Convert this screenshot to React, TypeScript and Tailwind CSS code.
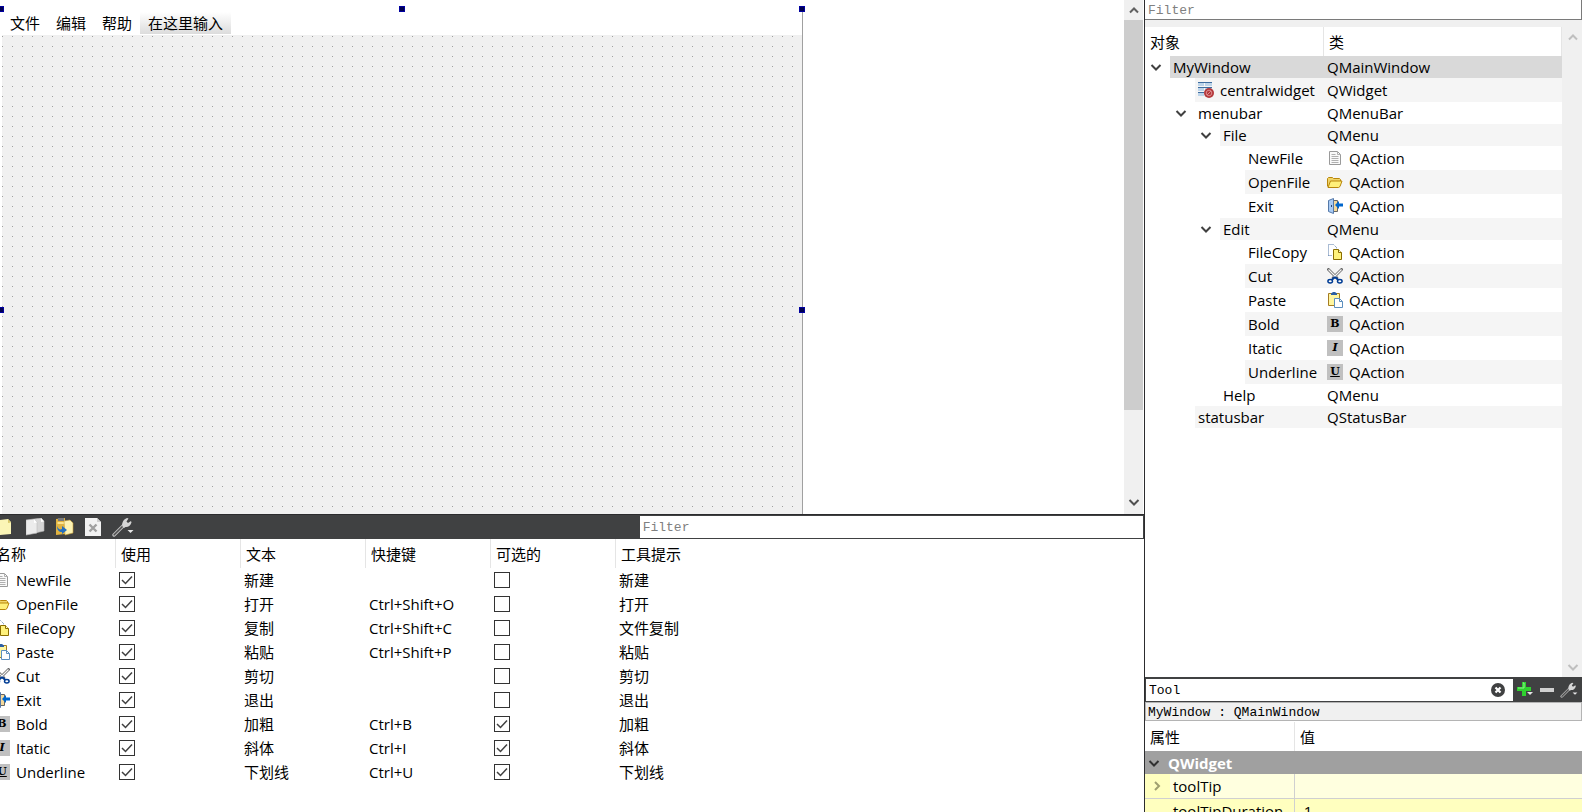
import { useState, type ReactNode } from "react";

const SANS = "font-['Open_Sans','Noto_Sans_CJK_SC',sans-serif]";
const MONO = "font-['Liberation_Mono','Noto_Sans_CJK_SC',monospace]";

type IconName = "new" | "open" | "exit" | "copy" | "cut" | "paste" | "bold" | "italic" | "underline" | "widget";

function Letter({ children, className }: { children: string; className: string }) {
  return (
    <span className={`flex size-4 shrink-0 items-center justify-center bg-[#c0c0c0] font-['DejaVu_Serif',serif] text-[11px] leading-4 font-bold text-black ${className}`}>
      {children}
    </span>
  );
}

function Icon({ name }: { name: IconName }) {
  if (name === "bold") return <Letter className="">B</Letter>;
  if (name === "italic") return <Letter className="italic">I</Letter>;
  if (name === "underline") return <Letter className="underline underline-offset-1">U</Letter>;
  return (
    <svg viewBox="0 0 16 16" className="size-4 shrink-0" fill="none" aria-hidden="true">
      {name === "new" && (
        <>
          <path d="M2.500 1.500h8l3 3v10h-11z" fill="#fafafa" stroke="#9a9a9a" />
          <path d="M10.500 1.500v3h3M4.500 4.500h4M4.500 6.500h7M4.500 8.500h7M4.500 10.500h7M4.500 12.500h7" stroke="#b0b0b0" />
        </>
      )}
      {name === "open" && (
        <>
          <path d="M.5 12.500v-8l1-1h4l1 1h6l1 1v2" fill="#f0d468" stroke="#b8860b" />
          <path d="M1 13.500l2.500-6.500h11.500l-2 5.500-1.500 1z" fill="#fff07a" stroke="#b8860b" />
        </>
      )}
      {name === "exit" && (
        <>
          <path d="M6.500 2.500h4v11h-4" fill="#f5d99a" stroke="#666" />
          <path d="M1.500 2.500l5-2v15l-5-2z" fill="#a9cbf5" stroke="#5579a8" />
          <path d="M4.500 7v2" stroke="#27466f" />
          <path d="M8 7L12 3v2.500h4v3h-4V11z" fill="#0066cc" />
        </>
      )}
      {name === "copy" && (
        <>
          <path d="M1.500 11.500v-11h5l3 3v1M1.500 11.500h3" stroke="#5579a8" strokeDasharray="1 1" />
          <path d="M6.500 5.500h5l3 3v7h-8z" fill="#fff27c" stroke="#8a6d00" />
          <path d="M11.500 5.500v3h3" fill="#fffbd0" stroke="#8a6d00" />
        </>
      )}
      {name === "cut" && (
        <>
          <path d="M.5.5l10 10M15.500.5l-10 10" stroke="#666" strokeWidth="2.800" />
          <path d="M1.500 1.500l8 8M14.500 1.500l-8 8" stroke="#f4f4f4" strokeWidth="1.200" />
          <path d="M8 9l-3.500 3M8 9l3.500 3" stroke="#003c94" strokeWidth="2" />
          <ellipse cx="3.200" cy="13.200" rx="2.300" ry="1.700" fill="#fff" stroke="#003c94" strokeWidth="1.500" />
          <ellipse cx="12.800" cy="13.200" rx="2.300" ry="1.700" fill="#fff" stroke="#003c94" strokeWidth="1.500" />
        </>
      )}
      {name === "paste" && (
        <>
          <path d="M1.500 1.500h11v12h-11z" fill="#fff6a0" stroke="#a57c22" />
          <path d="M4 3V1.500l2-1.500h2l2 1.500V3z" fill="#2c5fa5" />
          <path d="M7.500 6.500h5l3 3v6h-8z" fill="#fff" stroke="#5c8fbe" />
          <path d="M12.500 6.500v3h3" stroke="#5c8fbe" />
        </>
      )}
      {name === "widget" && (
        <>
          <path d="M0 0h6v4H0zM7 0h7v4H7zM0 5h6v4H0zM7 5h7v4H7zM0 10h6v4H0z" fill="#bcd4ea" />
          <path d="M0 .5h14M0 5.500h14M0 10.500h6" stroke="#3f6da0" />
          <circle cx="11" cy="11" r="5" fill="#b4383c" />
          <circle cx="11" cy="11" r="2.800" stroke="#dd8a8c" />
          <path d="M9 13l4-4" stroke="#dd8a8c" />
        </>
      )}
    </svg>
  );
}

function Chevron({ dir, className }: { dir: "up" | "down" | "right"; className: string }) {
  const d = dir === "up" ? "M2 8.500L6 4.500 10 8.500" : dir === "down" ? "M1.500 4L6 8.500 10.500 4" : "M4 2l4 4-4 4";
  return (
    <svg viewBox="0 0 12 12" className={`size-3 shrink-0 ${className}`} fill="none" stroke="currentColor" strokeWidth="2" aria-hidden="true">
      <path d={d} />
    </svg>
  );
}

function Wrench({ className }: { className: string }) {
  return (
    <svg viewBox="0 0 22 20" className={className} fill="none" aria-hidden="true">
      <path d="M2 18L12 8" stroke="#bdbdbd" strokeWidth="3.400" strokeLinecap="round" />
      <path d="M2.200 17.800L11.500 8.500" stroke="#505050" strokeWidth="1.600" strokeLinecap="round" />
      <path d="M10.500 9.500c-1-3 .5-7 4.500-8.500l1.500.5-2 3 1.500 1.500 3-2 .5 1.500c-1 3.500-4 5-6 4.500l-1.500 1z" fill="#d5d5d5" />
      <path d="M15.500 13h6l-3 3z" fill="#e6e6e6" />
    </svg>
  );
}

function Handle({ className }: { className: string }) {
  return <span className={`absolute z-10 size-1.5 -translate-x-1/2 -translate-y-1/2 border border-[#0000a0] bg-[#000050] ${className}`} />;
}

function FormEditor() {
  return (
    <section className="flex min-h-0 flex-1 bg-white">
      <div className="min-w-0 flex-1 overflow-hidden pt-[9px]">
        <div className="relative h-[602px] w-[803px] border-r border-l-2 border-r-[#a0a0a0] border-l-white">
          <Handle className="top-0 left-[-1px]" />
          <Handle className="top-0 left-1/2" />
          <Handle className="top-0 left-full" />
          <Handle className="top-1/2 left-[-1px]" />
          <Handle className="top-1/2 left-full" />
          <nav className="flex h-[26px] items-start bg-white pt-[3px] text-[15px] leading-[22px]">
            {["文件", "编辑", "帮助"].map((m) => (
              <button key={m} type="button" className="px-2">
                {m}
              </button>
            ))}
            <button type="button" className="bg-linear-to-b from-white to-[#dcdcdc] px-2">
              在这里输入
            </button>
          </nav>
          <svg className="block h-[576px] w-full bg-[#f0f0f0]" aria-hidden="true">
            <pattern id="grid" width="10" height="10" patternUnits="userSpaceOnUse">
              <rect x="0" y="1" width="1" height="1" fill="#a0a0a0" />
            </pattern>
            <rect width="100%" height="100%" fill="url(#grid)" />
          </svg>
        </div>
      </div>
      <div className="mr-px flex w-[19px] shrink-0 flex-col items-center bg-[#f0f0f0]">
        <button type="button" aria-label="Scroll up" className="flex h-5 shrink-0 items-center">
          <Chevron dir="up" className="text-[#606060]" />
        </button>
        <div className="flex min-h-0 w-full flex-1">
          <div className="h-[82%] w-full bg-[#cdcdcd]" />
        </div>
        <button type="button" aria-label="Scroll down" className="flex h-[18px] shrink-0 items-start">
          <Chevron dir="down" className="text-[#505050]" />
        </button>
      </div>
    </section>
  );
}

type Action = { icon: IconName; name: string; text: string; key: string; checkable: boolean; tip: string };

const actions: Action[] = [
  { icon: "new", name: "NewFile", text: "新建", key: "", checkable: false, tip: "新建" },
  { icon: "open", name: "OpenFile", text: "打开", key: "Ctrl+Shift+O", checkable: false, tip: "打开" },
  { icon: "copy", name: "FileCopy", text: "复制", key: "Ctrl+Shift+C", checkable: false, tip: "文件复制" },
  { icon: "paste", name: "Paste", text: "粘贴", key: "Ctrl+Shift+P", checkable: false, tip: "粘贴" },
  { icon: "cut", name: "Cut", text: "剪切", key: "", checkable: false, tip: "剪切" },
  { icon: "exit", name: "Exit", text: "退出", key: "", checkable: false, tip: "退出" },
  { icon: "bold", name: "Bold", text: "加粗", key: "Ctrl+B", checkable: true, tip: "加粗" },
  { icon: "italic", name: "Itatic", text: "斜体", key: "Ctrl+I", checkable: true, tip: "斜体" },
  { icon: "underline", name: "Underline", text: "下划线", key: "Ctrl+U", checkable: true, tip: "下划线" },
];

function Check({ initial, label }: { initial: boolean; label: string }) {
  const [on, setOn] = useState(initial);
  return (
    <label className="relative block size-4">
      <input
        type="checkbox"
        aria-label={label}
        checked={on}
        onChange={(e) => setOn(e.target.checked)}
        className="peer block size-4 appearance-none border border-[#333] bg-white"
      />
      <svg viewBox="0 0 16 16" className="pointer-events-none absolute inset-0 hidden size-4 peer-checked:block" fill="none" stroke="#404040" strokeWidth="1.500" aria-hidden="true">
        <path d="M3 8l3.500 3.500L13 4.500" />
      </svg>
    </label>
  );
}

function ToolButton({ label, children, className }: { label: string; children: ReactNode; className: string }) {
  return (
    <button type="button" aria-label={label} className={`flex shrink-0 items-center ${className}`}>
      {children}
    </button>
  );
}

function ActionEditor() {
  return (
    <section className="flex h-[298px] shrink-0 flex-col bg-white">
      <div className="flex h-[25px] shrink-0 items-stretch border-t border-[#2c2c2e] bg-[#404142]">
        <div className="flex flex-1 items-center">
          <ToolButton label="New action" className="w-[26px]">
            <svg viewBox="0 0 12 18" className="h-[18px] w-3" aria-hidden="true">
              <path d="M0 2l8-1 3 3v12l-11 1z" fill="#fbf5b6" />
              <path d="M8 1l3 3.500-3 .5z" fill="#d8c86a" />
            </svg>
          </ToolButton>
          <ToolButton label="Copy" className="w-[30px]">
            <svg viewBox="0 0 20 18" className="h-[18px] w-5" aria-hidden="true">
              <path d="M8 1l7-1 3 3v10l-9 2z" fill="#d6d6d6" stroke="#b5b5b5" strokeWidth=".6" />
              <path d="M0 2l8-1 3 3v11L0 17z" fill="#ececec" stroke="#bdbdbd" strokeWidth=".6" />
              <path d="M8 1l3 3.500-3 .5zM15 0l3 3.500-3 .5z" fill="#fff" />
            </svg>
          </ToolButton>
          <ToolButton label="Paste" className="w-[29px]">
            <svg viewBox="0 0 18 18" className="size-[18px]" aria-hidden="true">
              <path d="M0 1l9-1v16l-9 1z" fill="#e0b341" />
              <path d="M2 0h6v3h-6z" fill="#77797c" />
              <path d="M1.500 4h7v2h-7z" fill="#fbe38d" />
              <path d="M8 3l6-1 3 3v10l-8 2z" fill="#fdf3b4" stroke="#c6a036" strokeWidth=".6" />
              <path d="M1 8c1 3 3 4 5 3V8l5 4-5 4v-2c-3 0-5-2-5-6z" fill="#236ebf" />
            </svg>
          </ToolButton>
          <ToolButton label="Delete" className="w-[27px]">
            <svg viewBox="0 0 16 18" className="h-[18px] w-4" aria-hidden="true">
              <path d="M0 0h12l4 4v14H0z" fill="#f2f2f2" />
              <path d="M12 0l4 4h-4z" fill="#cfcfcf" />
              <path d="M4.500 6.500l7 7M11.500 6.500l-7 7" stroke="#a0a0a0" strokeWidth="2.400" />
            </svg>
          </ToolButton>
          <ToolButton label="Configure" className="">
            <Wrench className="h-5 w-[22px]" />
          </ToolButton>
        </div>
        <input
          aria-label="Filter actions"
          placeholder="Filter"
          className={`my-px mr-px w-[44%] bg-white pt-0.5 pl-[3px] text-[13px] leading-5 outline-none placeholder:text-[#808080] ${MONO}`}
        />
      </div>
      <div className="overflow-hidden">
        <table className="w-full table-fixed border-separate border-spacing-0 text-left text-[15px] leading-6">
          <colgroup>
            <col className="w-[116px]" />
            <col className="w-[125px]" />
            <col className="w-[125px]" />
            <col className="w-[125px]" />
            <col className="w-[125px]" />
            <col />
          </colgroup>
          <thead>
            <tr className="h-[29px]">
              {["名称", "使用", "文本", "快捷键", "可选的", "工具提示"].map((h, i) => (
                <th key={h} className={`p-0 font-normal ${i === 0 ? "border-r border-[#e5e5e5]" : i === 5 ? "pl-[5px]" : "border-r border-[#e5e5e5] pl-[5px]"}`}>
                  <span className={i === 0 ? "-ml-1 block" : "block"}>{h}</span>
                </th>
              ))}
            </tr>
          </thead>
          <tbody>
            {actions.map((a) => (
              <tr key={a.name} className="h-6">
                <td className="p-0">
                  <span className="-ml-1.5 flex items-center gap-1.5">
                    <Icon name={a.icon} />
                    {a.name}
                  </span>
                </td>
                <td className="p-0 pl-[3px]">
                  <Check initial label={`${a.name} used`} />
                </td>
                <td className="p-0 pl-[3px]">{a.text}</td>
                <td className="p-0 pl-[3px]">{a.key}</td>
                <td className="p-0 pl-[3px]">
                  <Check initial={a.checkable} label={`${a.name} checkable`} />
                </td>
                <td className="p-0 pl-[3px]">{a.tip}</td>
              </tr>
            ))}
          </tbody>
        </table>
      </div>
    </section>
  );
}

type Node = { level: 0 | 1 | 2 | 3; name: string; cls: string; open?: boolean; nameIcon?: IconName; icon?: IconName };

const nodes: Node[] = [
  { level: 0, name: "MyWindow", cls: "QMainWindow", open: true },
  { level: 1, name: "centralwidget", cls: "QWidget", nameIcon: "widget" },
  { level: 1, name: "menubar", cls: "QMenuBar", open: true },
  { level: 2, name: "File", cls: "QMenu", open: true },
  { level: 3, name: "NewFile", cls: "QAction", icon: "new" },
  { level: 3, name: "OpenFile", cls: "QAction", icon: "open" },
  { level: 3, name: "Exit", cls: "QAction", icon: "exit" },
  { level: 2, name: "Edit", cls: "QMenu", open: true },
  { level: 3, name: "FileCopy", cls: "QAction", icon: "copy" },
  { level: 3, name: "Cut", cls: "QAction", icon: "cut" },
  { level: 3, name: "Paste", cls: "QAction", icon: "paste" },
  { level: 3, name: "Bold", cls: "QAction", icon: "bold" },
  { level: 3, name: "Itatic", cls: "QAction", icon: "italic" },
  { level: 3, name: "Underline", cls: "QAction", icon: "underline" },
  { level: 2, name: "Help", cls: "QMenu" },
  { level: 1, name: "statusbar", cls: "QStatusBar" },
];

const branch = ["w-[25px]", "w-[50px]", "w-[75px]", "w-[100px]"];

function ObjectTree() {
  return (
    <section className="flex min-h-0 flex-1 flex-col bg-[#f0f0f0]">
      <input
        aria-label="Filter objects"
        placeholder="Filter"
        className={`h-5 w-full shrink-0 border-r border-b border-[#7a7a7a] bg-white pt-0.5 pl-[3px] text-[13px] leading-4 outline-none placeholder:text-[#808080] ${MONO}`}
      />
      <div className="mt-[7px] flex min-h-0 flex-1">
        <div className="mr-px min-w-0 flex-1 bg-white">
          <table className="w-full table-fixed border-separate border-spacing-0 text-left text-[15px] leading-[22px]">
            <colgroup>
              <col className="w-[179px]" />
              <col />
            </colgroup>
            <thead>
              <tr className="h-[29px]">
                <th className="border-r border-[#e5e5e5] p-0 pl-[5px] font-normal">对象</th>
                <th className="border-r border-[#e5e5e5] p-0 pl-[5px] font-normal">类</th>
              </tr>
            </thead>
            <tbody>
              {nodes.map((n, i) => {
                const bg = i === 0 ? "bg-[#d9d9d9]" : i % 2 ? "bg-[#f5f5f5]" : "bg-white";
                const h = n.icon || n.nameIcon ? "h-6" : "h-[22px]";
                return (
                  <tr key={n.name} className={h}>
                    <td className="p-0">
                      <div className={`flex ${h}`}>
                        <span className={`flex shrink-0 items-center justify-end pr-2 ${branch[n.level]}`}>
                          {n.open && <Chevron dir="down" className="text-[#404040]" />}
                        </span>
                        <span className={`flex min-w-0 flex-1 items-center gap-1.5 pl-[3px] whitespace-nowrap ${bg}`}>
                          {n.nameIcon && <Icon name={n.nameIcon} />}
                          {n.name}
                        </span>
                      </div>
                    </td>
                    <td className={`p-0 pl-[3px] ${bg}`}>
                      <span className="flex items-center gap-1.5">
                        {n.icon && <Icon name={n.icon} />}
                        {n.cls}
                      </span>
                    </td>
                  </tr>
                );
              })}
            </tbody>
          </table>
        </div>
        <div className="flex w-[19px] shrink-0 flex-col items-center justify-between bg-[#f0f0f0]">
          <button type="button" aria-label="Scroll up" className="flex h-5 items-center">
            <Chevron dir="up" className="text-[#bfbfbf]" />
          </button>
          <button type="button" aria-label="Scroll down" className="flex h-5 items-center">
            <Chevron dir="down" className="text-[#bfbfbf]" />
          </button>
        </div>
      </div>
    </section>
  );
}

function PropertyEditor() {
  return (
    <section className="flex h-[135px] shrink-0 flex-col overflow-hidden bg-white">
      <div className="flex h-[25px] shrink-0 items-center bg-[#404142] pl-px">
        <div className="flex h-[22px] flex-1 items-center bg-white pr-2">
          <input aria-label="Filter properties" defaultValue="Tool" className={`min-w-0 flex-1 pt-0.5 pl-[3px] text-[13px] leading-5 outline-none ${MONO}`} />
          <button type="button" aria-label="Clear">
            <svg viewBox="0 0 14 14" className="block size-3.5" aria-hidden="true">
              <circle cx="7" cy="7" r="7" fill="#404142" />
              <path d="M4.500 4.500l5 5M9.500 4.500l-5 5" stroke="#fff" strokeWidth="2.200" />
            </svg>
          </button>
        </div>
        <div className="flex w-[69px] shrink-0 items-center justify-between pr-1 pl-1">
          <ToolButton label="Add property" className="">
            <svg viewBox="0 0 16 16" className="size-4" aria-hidden="true">
              <path d="M5 0h4v5h5v4H9v5H5V9H0V5h5z" fill="#2fd12f" />
              <path d="M6 1h1v5H1" stroke="#8cf58c" fill="none" />
              <path d="M10 10h6l-3 3z" fill="#e6e6e6" />
            </svg>
          </ToolButton>
          <ToolButton label="Remove property" className="">
            <span className="block h-1 w-3.5 bg-[#d0d0d0]" />
          </ToolButton>
          <ToolButton label="Configure properties" className="">
            <Wrench className="h-4 w-[18px]" />
          </ToolButton>
        </div>
      </div>
      <p className={`h-[19px] shrink-0 border border-[#b4b4b4] bg-[#f0f0f0] pl-0.5 text-[13px] leading-5 ${MONO}`}>MyWindow : QMainWindow</p>
      <table className="mt-px w-full table-fixed border-separate border-spacing-0 text-left text-[15px] leading-[22px]">
        <colgroup>
          <col className="w-[150px]" />
          <col />
        </colgroup>
        <thead>
          <tr className="h-[29px]">
            <th className="border-r border-[#e5e5e5] p-0 pl-[5px] font-normal">属性</th>
            <th className="p-0 pl-[5px] font-normal">值</th>
          </tr>
        </thead>
        <tbody>
          <tr className="h-[23px] bg-[#a0a0a0] text-white">
            <th colSpan={2} className="p-0 pl-[3px] font-bold">
              <span className="flex items-center gap-2">
                <Chevron dir="down" className="text-[#303030]" />
                QWidget
              </span>
            </th>
          </tr>
          <tr className="h-[25px] bg-[#ffffdf]">
            <td className="border-r border-b border-[#d0d0d0] p-0">
              <span className="flex h-6 items-stretch">
                <span className="flex w-[25px] items-center bg-[#ffffbf] pl-1.5">
                  <Chevron dir="right" className="text-[#a0a070]" />
                </span>
                <span className="pl-[3px] leading-6">toolTip</span>
              </span>
            </td>
            <td className="border-b border-[#d0d0d0] p-0" />
          </tr>
          <tr className="h-6 bg-[#ffffbf]">
            <td className="border-r border-[#d0d0d0] p-0 pl-7 whitespace-nowrap">toolTipDuration</td>
            <td className="p-0 pl-1">-1</td>
          </tr>
        </tbody>
      </table>
    </section>
  );
}

export default function App() {
  return (
    <main className={`flex h-screen overflow-hidden bg-white text-black ${SANS}`}>
      <div className="flex min-w-0 flex-1 flex-col overflow-hidden">
        <FormEditor />
        <ActionEditor />
      </div>
      <div className="flex w-[438px] shrink-0 flex-col border-l border-[#2c2c2e]">
        <ObjectTree />
        <PropertyEditor />
      </div>
    </main>
  );
}
